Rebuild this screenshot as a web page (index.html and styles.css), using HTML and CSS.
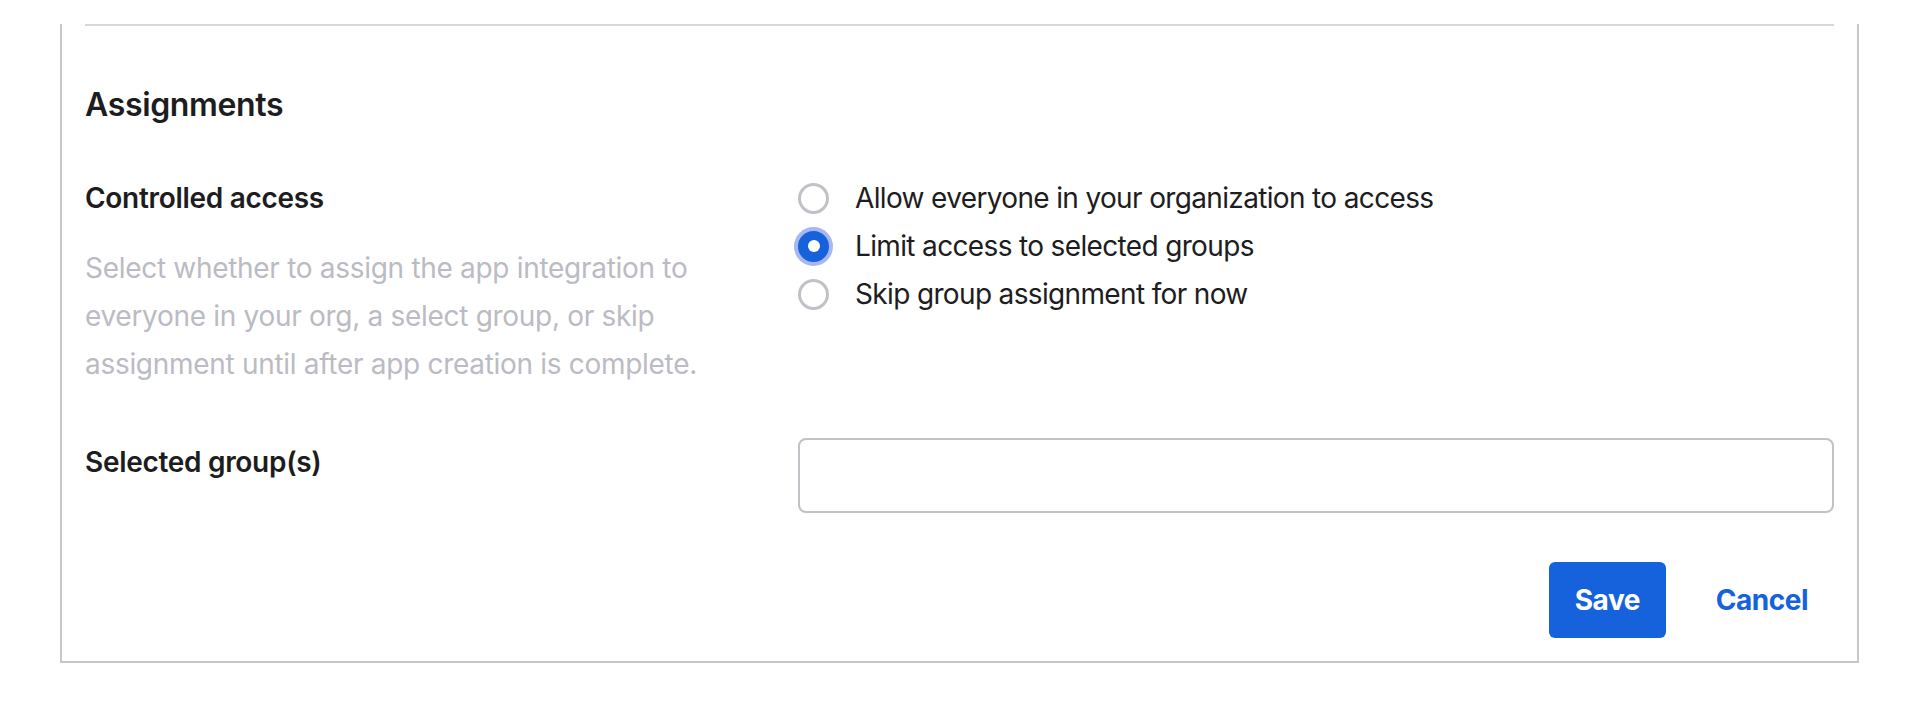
FILE: index.html
```html
<!DOCTYPE html>
<html lang="en">
<head>
<meta charset="utf-8">
<title>Assignments</title>
<link rel="stylesheet" href="styles.css">
</head>
<body>
<section class="card">
  <div class="divider"></div>
  <h2 class="section-title">Assignments</h2>
  <div class="form-grid">
    <div class="field-info">
      <div class="field-label">Controlled access</div>
      <p class="field-desc">Select whether to assign the app integration to everyone in your org, a select group, or skip assignment until after app creation is complete.</p>
    </div>
    <div class="radio-list">
      <label class="radio-row"><span class="radio"></span><span class="radio-text">Allow everyone in your organization to access</span></label>
      <label class="radio-row"><span class="radio radio-checked"></span><span class="radio-text">Limit access to selected groups</span></label>
      <label class="radio-row"><span class="radio"></span><span class="radio-text">Skip group assignment for now</span></label>
    </div>
    <div class="field-info">
      <div class="field-label">Selected group(s)</div>
    </div>
    <div class="field-control">
      <div class="text-input"></div>
    </div>
  </div>
  <div class="actions">
    <button class="btn btn-primary">Save</button>
    <button class="btn btn-link">Cancel</button>
  </div>
</section>
</body>
</html>
```

FILE: styles.css
```css
* { box-sizing: border-box; }

html, body {
  margin: 0;
  padding: 0;
  background: #ffffff;
}

body {
  font-family: Inter, "Noto Sans", "Liberation Sans", sans-serif;
  color: #1d1d21;
}

.card {
  margin: 0 55px 0 60px;
  border: 2px solid #c6c6cc;
  border-top: none;
  padding: 0 23px 23px;
}

.divider {
  margin-top: 24px;
  height: 2px;
  background: #d7d7dc;
}

.section-title {
  margin: 59px 0 0;
  font-size: 32px;
  line-height: 40px;
  font-weight: 600;
  letter-spacing: -0.35px;
  color: #1d1d21;
}

.form-grid {
  margin-top: 49px;
  display: grid;
  grid-template-columns: 665px 1fr;
  column-gap: 48px;
  row-gap: 50px;
}

.field-label {
  font-size: 28px;
  line-height: 48px;
  font-weight: 600;
  letter-spacing: -0.3px;
  color: #1d1d21;
}

.field-desc {
  margin: 22px 0 0;
  font-size: 28px;
  line-height: 48px;
  letter-spacing: -0.3px;
  color: #bbbbc3;
}

.radio-list {
  display: flex;
  flex-direction: column;
}

.radio-row {
  display: flex;
  align-items: center;
  gap: 26px;
  height: 48px;
  font-size: 28px;
  line-height: 48px;
  letter-spacing: -0.65px;
  color: #1d1d21;
}

.radio {
  flex: 0 0 auto;
  width: 31px;
  height: 31px;
  border-radius: 50%;
  border: 3px solid #c1c1c8;
  background: #ffffff;
  display: flex;
  align-items: center;
  justify-content: center;
}

.radio-checked {
  border-color: #1662dd;
  background: #1662dd;
  box-shadow: 0 0 0 4px #a8b7f1;
}

.radio-checked::after {
  content: "";
  width: 12px;
  height: 12px;
  border-radius: 50%;
  background: #ffffff;
}

.text-input {
  height: 75px;
  border: 2px solid #c1c1c8;
  border-radius: 8px;
  background: #ffffff;
}

.actions {
  margin-top: 49px;
  display: flex;
  justify-content: flex-end;
  gap: 24px;
}

.btn {
  height: 76px;
  padding: 0 26px;
  border: none;
  border-radius: 6px;
  font-family: Inter, "Liberation Sans", sans-serif;
  font-size: 28px;
  font-weight: 700;
  letter-spacing: -0.5px;
  cursor: pointer;
}

.btn-primary {
  background: #1662dd;
  color: #ffffff;
}

.btn-link {
  background: transparent;
  color: #1662dd;
}
```
